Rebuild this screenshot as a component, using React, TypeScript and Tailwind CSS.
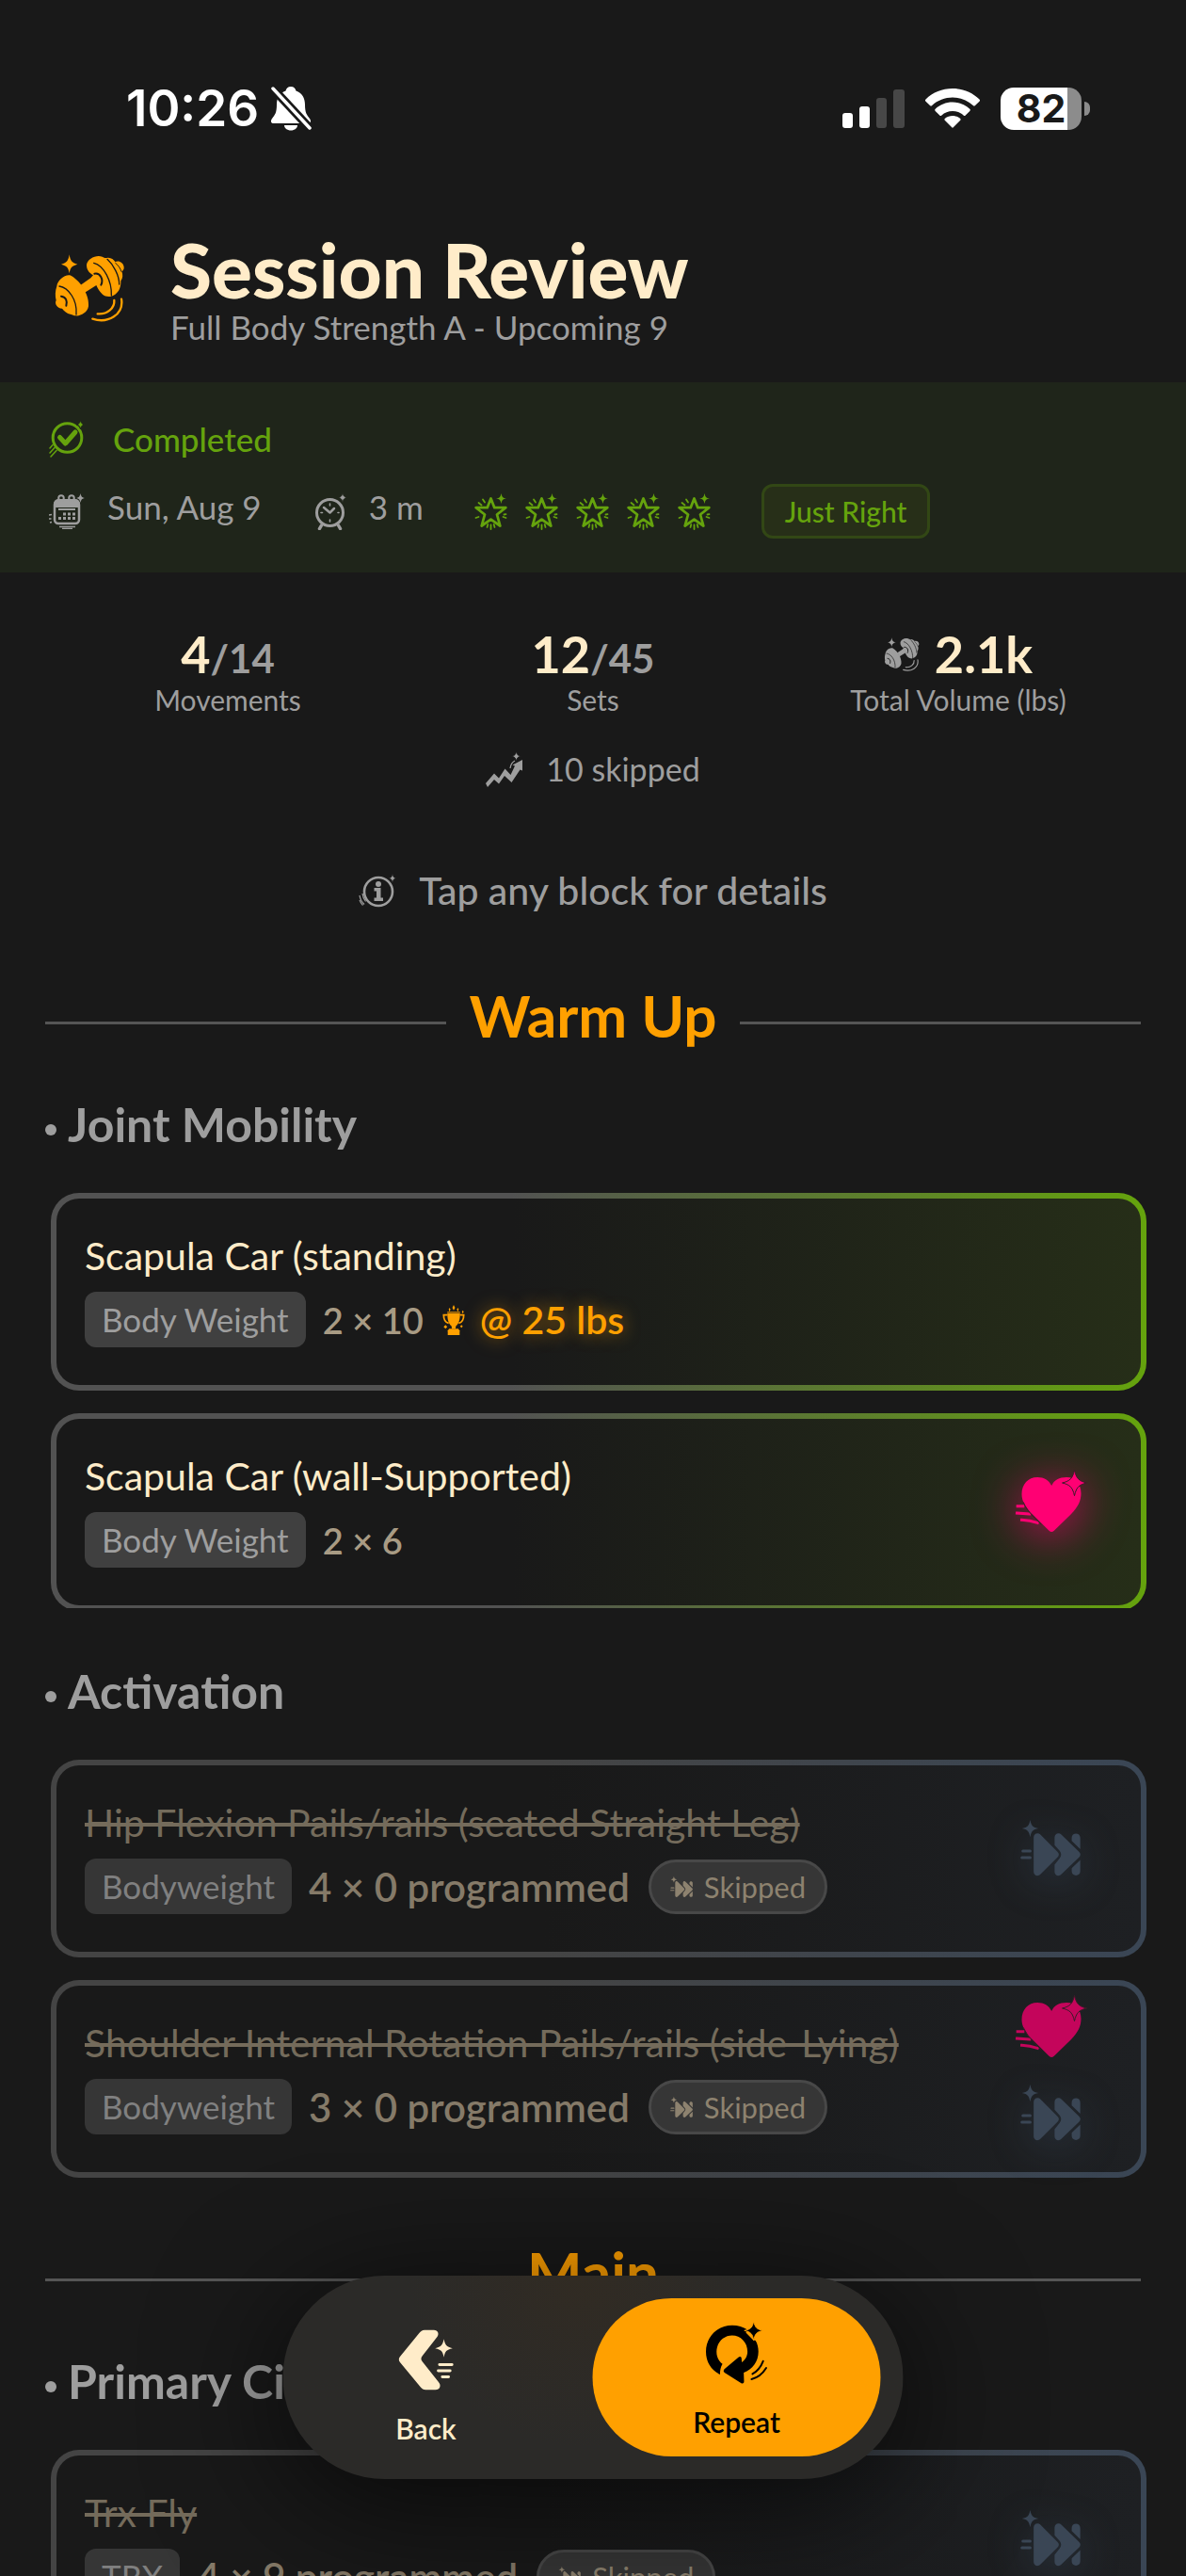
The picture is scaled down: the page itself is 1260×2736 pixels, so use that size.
import React from "react";

type IconProps = { className?: string };

/* ---------- status bar icons ---------- */

function BellOff({ className }: IconProps) {
  return (
    <svg viewBox="0 0 44 48" className={className} fill="currentColor" aria-hidden="true">
      <path d="M22 1c3 0 5 2 5.500 4.500C34 8 37 13 37 20c0 9 2 11 5 15 2 3 1 5-2 5H4c-3 0-4-2-2-5 3-4 5-6 5-15 0-7 3-12 9.500-14.500C17 3 19 1 22 1Z" />
      <path d="M15 42h14c0 3-3 5.500-7 5.500s-7-2.500-7-5.500Z" />
      <path d="M3 3l39 42" stroke="#191919" strokeWidth="9" />
      <path d="M3 3l39 42" stroke="currentColor" strokeWidth="3.500" strokeLinecap="round" />
    </svg>
  );
}

function Signal({ className }: IconProps) {
  return (
    <svg viewBox="0 0 66 42" className={className} aria-hidden="true">
      <rect x="0" y="26" width="11" height="16" rx="3" fill="#fff" />
      <rect x="18" y="19" width="11" height="23" rx="3" fill="#fff" />
      <rect x="36" y="10" width="11" height="32" rx="3" fill="#474747" />
      <rect x="54" y="1" width="12" height="41" rx="3" fill="#474747" />
    </svg>
  );
}

function Wifi({ className }: IconProps) {
  return (
    <svg viewBox="0 0 58 42" className={className} fill="#fff" aria-hidden="true">
      <path d="M29 0c11 0 21 4 28.500 11.500.7.7.7 1.500 0 2.200L53 18c-.7.7-1.500.7-2.200 0C45 12.500 37 9.500 29 9.500S13 12.500 7.200 18c-.7.7-1.500.7-2.200 0L.5 13.700c-.7-.7-.7-1.500 0-2.200C8 4 18 0 29 0Z" />
      <path d="M29 14.500c7 0 13.500 2.700 18.300 7.200.7.700.7 1.500 0 2.200l-4.600 4.500c-.7.700-1.400.700-2.100 0C37.500 25.600 33.500 24 29 24s-8.500 1.600-11.600 4.400c-.7.700-1.400.700-2.100 0l-4.600-4.500c-.7-.7-.7-1.500 0-2.200C15.500 17.200 22 14.500 29 14.500Z" />
      <path d="M29 29c3 0 5.800 1 8 2.800.8.700.8 1.500 0 2.300l-7 7c-.7.700-1.300.700-2 0l-7-7c-.8-.8-.8-1.600 0-2.300C23.200 30 26 29 29 29Z" />
    </svg>
  );
}

/* ---------- app icons ---------- */

function Dumbbell({ className }: IconProps) {
  return (
    <svg viewBox="50 55 228 222" className={className} fill="currentColor" aria-hidden="true">
      <path d="M100 59c3 19 7 26 26 31-19 5-23 12-26 29-3-17-7-24-26-29 19-5 23-12 26-31Z" />
      <path d="M60 160c2-20 28-40 45-34 36 20 60 68 56 98-3 20-26 32-40 30-8 0-10-4-18-5-10-2-20-10-26-18-16 0-25-16-19-26-4-14-3-30 2-45Z" />
      <path d="M155 92c2-20 32-34 50-26 5 2 9 5 14 4 12-3 22 5 27 12 12-5 26 2 28 17 1 8-4 12-7 14 4 10 4 22-3 30 1 16-4 34-18 43-14 10-30 8-40 0-9-8-15-18-20-29l-38 24c-2-10-6-18-12-25l32-22 8-9c-14-8-21-18-21-33Z" />
      <g fill="none" stroke="#191919" strokeLinecap="round">
        <path d="M68 160c28 4 58 42 54 90" strokeWidth="4" />
        <path d="M74 192c16 2 20 16 16 30" strokeWidth="6" />
        <path d="M178 86c32 8 58 58 56 104" strokeWidth="4" />
        <path d="M221 74c20 18 38 52 38 80" strokeWidth="4" />
        <path d="M247 86c10 8 16 18 19 27" strokeWidth="3" />
        <path d="M180 120c18-4 30 18 21 36" strokeWidth="6" />
      </g>
      <g fill="none" stroke="currentColor" strokeWidth="7" strokeLinecap="round">
        <path d="M190 248c30 3 55-18 53-43" />
        <path d="M174 264c50 16 100-14 92-63" />
      </g>
    </svg>
  );
}

function CheckBadge({ className }: IconProps) {
  return (
    <svg viewBox="0 0 38 40" className={className} fill="none" stroke="currentColor" aria-hidden="true">
      <circle cx="19.500" cy="19" r="15.300" strokeWidth="3" />
      <path d="M11.500 18.500l6 6.500L28 13" strokeWidth="5" strokeLinejoin="round" strokeLinecap="round" />
      <path d="M1 30l3-3.500M1 35l5-5.500M2 39l6-6.500" strokeWidth="1.500" strokeLinecap="round" />
      <path d="M33.500 0c.8 3.400 1.200 4.200 4.500 5-3.300.8-3.700 1.600-4.500 5-.8-3.400-1.200-4.200-4.500-5 3.300-.8 3.700-1.600 4.500-5Z" fill="currentColor" stroke="#1f251a" strokeWidth="1" />
    </svg>
  );
}

function Calendar({ className }: IconProps) {
  return (
    <svg viewBox="0 0 38 38" className={className} fill="none" stroke="currentColor" aria-hidden="true">
      <rect x="6" y="8" width="26" height="24" rx="4" strokeWidth="2.500" />
      <path d="M5 15V11a5 5 0 0 1 5-5h18a5 5 0 0 1 5 5v4Z" fill="currentColor" stroke="none" />
      <circle cx="13" cy="5" r="2.800" strokeWidth="2" />
      <circle cx="24" cy="5" r="2.800" strokeWidth="2" />
      <path d="M10 17h18" strokeWidth="2" />
      <path d="M15 22h13M10 26.500h18" strokeWidth="3" strokeDasharray="3 2" />
      <path d="M11 35.500h17M14 37.500h11" strokeWidth="1.400" />
      <path d="M0 23l3-.5M0 27h2.500M1 31l2-.5" strokeWidth="1.300" />
      <path d="M33.500 0c.8 3.400 1.200 4.200 4.500 5-3.300.8-3.700 1.600-4.500 5-.8-3.400-1.200-4.200-4.500-5 3.300-.8 3.700-1.600 4.500-5Z" fill="currentColor" stroke="none" />
    </svg>
  );
}

function AlarmClock({ className }: IconProps) {
  return (
    <svg viewBox="0 0 36 40" className={className} fill="none" stroke="currentColor" strokeLinecap="round" aria-hidden="true">
      <circle cx="16.500" cy="21.500" r="14" strokeWidth="3" />
      <path d="M10 16l6.500 5.500L21 17" strokeWidth="2.500" strokeLinejoin="round" />
      <path d="M16.500 12v2M16.500 29v2M7 21.500h1.500M25 21.500h1" strokeWidth="1.600" />
      <path d="M7.500 35l-2 3.500M25.500 35l2 3.500" strokeWidth="3.500" />
      <path d="M30 0c.9 4 1.400 5 5.500 5.500C31.400 6.200 30.900 7 30 11c-.9-4-1.400-4.800-5.500-5.500C28.600 5 29.100 4 30 0Z" fill="currentColor" stroke="#1f251a" strokeWidth="1" />
    </svg>
  );
}

function StarIcon({ className }: IconProps) {
  return (
    <svg viewBox="0 0 35 39" className={className} fill="none" stroke="currentColor" strokeLinecap="round" aria-hidden="true">
      <path d="M17.500 5.500l3.800 9.700h12l-9.300 7.300 3.300 12-9.800-6.800-9.800 6.800 3.300-12-9.300-7.300h12Z" strokeWidth="2.800" strokeLinejoin="round" />
      <path d="M4.500 10l3 2.500M9 6.500l2 3M1.500 26l3-1M33.500 26l-3-1M31.500 22.500l2-.3M13.500 36l.8-3M17.500 38v-4.500M21.500 36l-.8-3" strokeWidth="1.800" />
      <path d="M28.500 0c.9 4 1.400 4.800 5.500 5.500-4.100.7-4.600 1.500-5.500 5.500-.9-4-1.400-4.800-5.500-5.500C27.100 4.800 27.600 4 28.500 0Z" fill="currentColor" stroke="none" />
    </svg>
  );
}

function Trend({ className }: IconProps) {
  return (
    <svg viewBox="0 0 40 38" className={className} aria-hidden="true" fill="currentColor">
      <path d="M0 34L9 23.500l5 5L20.500 18.500l6 6.500 4.500-9.500-2.500-1L39 9v11.500l-2.500-1L27.500 33 20 26l-6 8.500L9 30l-7 8Z" />
      <path d="M26 18c.5-4 2-6.500 5-8" stroke="currentColor" strokeWidth="1.200" fill="none" />
      <path d="M32.500 0c.8 3.600 1.500 4.500 5 5.200-3.500.7-4.200 1.600-5 5.300-.8-3.700-1.500-4.600-5-5.300 3.500-.7 4.200-1.600 5-5.200Z" stroke="#191919" strokeWidth=".8" />
    </svg>
  );
}

function InfoBadge({ className }: IconProps) {
  return (
    <svg viewBox="0 0 40 36" className={className} fill="none" stroke="currentColor" aria-hidden="true">
      <circle cx="21" cy="19" r="15" strokeWidth="2.600" />
      <circle cx="21" cy="11" r="3" fill="currentColor" stroke="none" />
      <path d="M16.500 15H23.500V25.500H26V29H16.500V25.500H19V18.500H16.500Z" fill="currentColor" stroke="none" />
      <path d="M1 23c.5 4 2.500 7 5 9.500M1 28c1 2.500 2 4 3.500 5.500M4 21c.5 4 1.500 6 3.500 8.500" strokeWidth="1.200" />
      <path d="M36 0c.7 3.300 1.200 4.200 4 4.800-2.800.6-3.300 1.500-4 4.700-.7-3.200-1.200-4.100-4-4.700C34.800 4.200 35.300 3.300 36 0Z" fill="currentColor" stroke="#191919" strokeWidth=".6" />
    </svg>
  );
}

function Trophy({ className }: IconProps) {
  return (
    <svg viewBox="0 0 24 33" className={className} fill="currentColor" aria-hidden="true">
      <path d="M5 9h14c0 7-1.500 12-4.500 14l-.5 3h-4l-.5-3C6.500 21 5 16 5 9Z" />
      <path d="M5 11H1c0 5 2 8 5.500 9M19 11h4c0 5-2 8-5.500 9" fill="none" stroke="currentColor" strokeWidth="1.800" />
      <path d="M7 26h10l1.500 2v5h-13v-5Z" />
      <path d="M12 0l1.500 3L12 6l-1.500-3ZM7.500 3l1 2-1 2.500-1-2.500ZM16.500 3l1 2-1 2.500-1-2.500ZM22 6l1 1.500-1 2-1-2ZM3 22l2 2-2 2-2-2ZM20.500 22l1.500 1.500-1.500 1.500-1.500-1.500Z" />
      <path d="M5 8h14" stroke="currentColor" strokeWidth="1" />
    </svg>
  );
}

function Heart({ className }: IconProps) {
  return (
    <svg viewBox="86 78 224 198" className={className} fill="currentColor" aria-hidden="true">
      <path d="M200 126c-9-18-24-27-45-27-30 0-50 23-50 54 0 22 12 42 34 64l53 52c6 5 10 5 16 0l54-52c22-23 32-42 32-67 0-29-18-51-46-51-24 0-40 9-48 27Z" />
      <path d="M273 76c6 27 14 35 39 41-25 6-33 14-39 41-6-27-14-35-39-41 25-6 33-14 39-41Z" stroke="#3a1c28" strokeWidth="3" />
      <path d="M92 191h17M90 213l40 3M105 235q26 1 50 9" stroke="currentColor" strokeWidth="9" strokeLinecap="square" fill="none" />
      <path d="M110 178q10 26 38 52l20 20" stroke="#3a1c28" strokeWidth="3" fill="none" />
    </svg>
  );
}

function Skip({ className }: IconProps) {
  return (
    <svg viewBox="1152 38 190 178" className={className} fill="currentColor" aria-hidden="true">
      <path d="M1183 38c4 19 8 23 26 27-18 4-22 8-26 27-4-19-8-23-26-27 18-4 22-8 26-27Z" />
      <path d="M1194 93c0-12 13-17 22-8l53 53c6 6 6 12 0 18l-53 53c-9 9-22 4-22-8Z" />
      <path d="M1260 93c0-12 13-17 22-8l55 53c6 6 6 12 0 18l-55 53c-9 9-22 4-22-8v-22l16-20c6-8 6-16 0-24l-16-18Z" />
      <path d="M1314 94c0-17 27-17 27 0v36l-27-26ZM1314 190l27-26v36c0 17-27 17-27 0Z" />
      <path d="M1160 136h23M1157 157h26" stroke="currentColor" strokeWidth="9" strokeLinecap="round" />
    </svg>
  );
}

function BackIcon({ className }: IconProps) {
  return (
    <svg viewBox="68 106 178 196" className={className} fill="currentColor" aria-hidden="true">
      <path d="M151 108h30c13 0 18 12 10 23l-47 60c-5 6-5 12 0 18l52 66c10 11 4 25-10 25h-31c-8 0-12-3-17-9l-65-79c-6-7-6-12 0-19l61-75c5-6 9-10 17-10Z" />
      <path d="M213 137c4 20 8 25 28 30-20 4-24 9-28 29-4-20-8-25-28-29 20-5 24-10 28-30Z" />
      <path d="M199 219h40M195 239h38M208 258h20" stroke="currentColor" strokeWidth="9" strokeLinecap="round" />
    </svg>
  );
}

function RepeatIcon({ className }: IconProps) {
  return (
    <svg viewBox="1050 84 198 202" className={className} fill="currentColor" aria-hidden="true">
      <path d="M1096 256c-28-14-45-40-45-73 0-49 38-85 84-85 19 0 36 5 48 14l-4 10 22 22 9 3c6 10 9 22 9 36 0 32-19 56-47 67l1 28c0 7-5 8-10 5l-50-32c-7-4-7-8-2-13l44-37c5-4 10-2 10 4l1 12c11-8 18-20 18-34 0-30-22-52-49-52s-50 22-50 52c0 17 7 30 19 39-6 10-8 21-8 34Z" />
      <path d="M1204 84c4 21 9 27 30 31-21 5-26 10-30 32-4-22-9-27-30-32 21-4 26-10 30-31Z" stroke="#ffa000" strokeWidth="3" />
      <path d="M1234 213c-7 18-18 32-34 41M1244 235c-11 18-26 31-47 36" fill="none" stroke="currentColor" strokeWidth="6" strokeLinecap="round" />
    </svg>
  );
}

/* ---------- pieces ---------- */

function Stat({ value, total, label, icon }: { value: string; total?: string; label: string; icon?: React.ReactNode }) {
  return (
    <div className="flex flex-col items-center">
      <p className="flex items-center justify-center text-[54px] leading-[60px] font-bold text-[#ffecc9]">
        {icon}
        <span>
          {value}
          {total && <span className="text-[42px] leading-none text-[#9e9e9e]">/{total}</span>}
        </span>
      </p>
      <p className="text-[30px] leading-9 text-[#9e9e9e]">{label}</p>
    </div>
  );
}

function SectionHeading({ children }: { children: string }) {
  return (
    <div className="mx-12 flex items-center gap-6">
      <span className="h-[3px] flex-1 bg-[#555555]" />
      <h2 className="pb-4 text-[62px] leading-[60px] font-bold text-[#ffa000]">{children}</h2>
      <span className="h-[3px] flex-1 bg-[#555555]" />
    </div>
  );
}

function GroupHeading({ children }: { children: string }) {
  return (
    <h3 className="mx-12 flex items-center gap-3 text-[50px] leading-[60px] font-bold text-[#9e9e9e]">
      <span className="mt-3 size-3 rounded-full bg-[#9e9e9e]" />
      {children}
    </h3>
  );
}

type Movement = {
  name: string;
  equipment: string;
  sets: string;
  record?: string;
  favorite?: boolean;
  skipped?: boolean;
};

function MovementCard({ name, equipment, sets, record, favorite, skipped }: Movement) {
  const surface = skipped
    ? "[background:linear-gradient(90deg,#191919_45%,#1e2023)_padding-box,linear-gradient(90deg,#444444_45%,#3a4655)_border-box]"
    : "[background:linear-gradient(90deg,#191919_42%,#262e18)_padding-box,linear-gradient(90deg,#525252_42%,#65a30d)_border-box]";
  return (
    <button
      type="button"
      className={`flex w-full items-center rounded-[30px] border-[6px] border-transparent px-[30px] pt-[37px] pb-10 text-left ${surface}`}
    >
      <span className="min-w-0 flex-1">
        <span
          className={`block text-[41px] leading-[48px] whitespace-nowrap ${skipped ? "text-[#746b5b] line-through decoration-[4px]" : "text-[#ffecc9]"}`}
        >
          {name}
        </span>
        <span className="mt-[14px] flex items-center">
          <span
            className={`rounded-xl px-[18px] text-[35px] leading-[59px] whitespace-nowrap ${skipped ? "bg-[#363636] text-[#808080]" : "bg-[#404040] text-[#9e9e9e]"}`}
          >
            {equipment}
          </span>
          <span
            className={`ml-[18px] leading-[56px] font-semibold whitespace-nowrap ${skipped ? "text-[42px] text-[#857a68]" : "text-[38px] text-[#a89b84]"}`}
          >
            {sets}
          </span>
          {record && (
            <span className="ml-5 flex items-center gap-4 text-[41px] leading-[56px] font-semibold whitespace-nowrap text-[#ffa000]">
              <Trophy className="h-8 w-6" />
              <span className="[text-shadow:0_0_18px_rgba(255,160,0,0.6)]">{record}</span>
            </span>
          )}
          {skipped && (
            <span className="ml-5 flex h-[58px] items-center gap-3 rounded-full border-[3px] border-[#484848] bg-[#363636] px-5 text-[31px] leading-[52px] whitespace-nowrap text-[#8d826f]">
              <Skip className="size-6" />
              Skipped
            </span>
          )}
        </span>
      </span>
      <span className="mr-7 -mt-11 -mb-6 flex w-[76px] flex-col items-center gap-7">
        {favorite && (
          <Heart
            className={`h-[66px] w-[75px] overflow-visible ${skipped ? "text-[#c4055b]" : "text-[#ff0073] drop-shadow-[0_8px_24px_rgba(255,0,115,0.7)]"}`}
          />
        )}
        {skipped && <Skip className="h-[60px] w-16 text-[#3a4655] drop-shadow-[0_8px_20px_rgba(70,95,125,0.3)]" />}
      </span>
    </button>
  );
}

export default function App() {
  return (
    <div className="relative flex h-screen flex-col overflow-hidden bg-[#191919] font-['Lato',sans-serif]">
      <div className="flex h-[230px] shrink-0 items-start justify-between pt-[80px] pr-[102px] pl-[134px] font-['Inter',sans-serif]">
        <div className="flex h-[70px] items-center gap-3 text-white">
          <span className="text-[53px] leading-[70px] font-semibold">10:26</span>
          <BellOff className="h-12 w-11" />
        </div>
        <div className="flex h-[70px] items-center gap-[22px]">
          <Signal className="h-[42px] w-[66px]" />
          <Wifi className="h-[42px] w-[58px]" />
          <div className="flex items-center gap-[3px]">
            <div className="flex h-[45px] w-[86px] items-center justify-center rounded-[14px] bg-[linear-gradient(90deg,#ffffff_82%,#8c8c8c_82%)] text-[41px] leading-[45px] font-bold text-[#191919]">
              82
            </div>
            <span className="h-[15px] w-[6px] rounded-r-full bg-[#8c8c8c]" />
          </div>
        </div>
      </div>

      <main className="min-h-0 flex-1 overflow-hidden">
        <header className="flex items-start gap-[48px] pt-5 pb-[35px] pl-[57px]">
          <Dumbbell className="mt-[18px] size-[76px] text-[#ffa000]" />
          <div>
            <h1 className="text-[80px] leading-[73px] font-black text-[#ffecc9]">Session Review</h1>
            <p className="text-[35px] leading-[48px] text-[#9e9e9e]">Full Body Strength A - Upcoming 9</p>
          </div>
        </header>

        <section className="bg-[#1f251a] px-[52px] py-9 text-[35px] leading-[48px]">
          <div className="flex items-center gap-[30px] text-[#65a30d]">
            <CheckBadge className="h-10 w-[38px]" />
            <span className="font-medium">Completed</span>
          </div>
          <div className="mt-6 flex items-start text-[#9e9e9e]">
            <Calendar className="size-[38px] self-center" />
            <span className="ml-6">Sun, Aug 9</span>
            <AlarmClock className="ml-14 h-10 w-9 self-center" />
            <span className="ml-[22px]">3 m</span>
            <div className="ml-[54px] flex gap-[19px] self-center text-[#65a30d]" role="img" aria-label="5 stars">
              {[1, 2, 3, 4, 5].map((n) => (
                <StarIcon key={n} className="h-[39px] w-[35px]" />
              ))}
            </div>
            <span className="ml-[54px] rounded-xl border-[3px] border-[#324715] bg-[#272f18] px-[22px] text-[30px] leading-[52px] font-medium text-[#65a30d]">
              Just Right
            </span>
          </div>
        </section>

        <section className="grid grid-cols-3 px-12 pt-[57px]">
          <Stat value="4" total="14" label="Movements" />
          <Stat value="12" total="45" label="Sets" />
          <Stat
            value="2.1k"
            label="Total Volume (lbs)"
            icon={<Dumbbell className="mr-4 size-[38px] text-[#9e9e9e]" />}
          />
        </section>

        <p className="mt-8 flex items-center justify-center gap-6 text-[34px] leading-[48px] text-[#9e9e9e]">
          <Trend className="h-[38px] w-10" />
          10 skipped
        </p>
        <p className="mt-[81px] flex items-center justify-center gap-6 text-[41px] leading-[48px] font-medium text-[#9e9e9e]">
          <InfoBadge className="h-9 w-10" />
          Tap any block for details
        </p>

        <div className="mt-[78px]">
          <SectionHeading>Warm Up</SectionHeading>
        </div>
        <div className="mt-10">
          <GroupHeading>Joint Mobility</GroupHeading>
        </div>
        <div className="mt-[43px] mr-[42px] ml-[54px] flex flex-col gap-6 overflow-hidden">
          <MovementCard name="Scapula Car (standing)" equipment="Body Weight" sets="2 × 10" record="@ 25 lbs" />
          <div className="-mb-[3px]">
            <MovementCard name="Scapula Car (wall-Supported)" equipment="Body Weight" sets="2 × 6" favorite />
          </div>
        </div>

        <div className="mt-[58px]">
          <GroupHeading>Activation</GroupHeading>
        </div>
        <div className="mt-[43px] mr-[42px] ml-[54px] flex flex-col gap-6">
          <MovementCard
            name="Hip Flexion Pails/rails (seated Straight Leg)"
            equipment="Bodyweight"
            sets="4 × 0 programmed"
            skipped
          />
          <MovementCard
            name="Shoulder Internal Rotation Pails/rails (side-Lying)"
            equipment="Bodyweight"
            sets="3 × 0 programmed"
            favorite
            skipped
          />
        </div>

        <div className="mt-[70px]">
          <SectionHeading>Main</SectionHeading>
        </div>
        <div className="mt-10">
          <GroupHeading>Primary Circuit</GroupHeading>
        </div>
        <div className="mt-[43px] mr-[42px] ml-[54px]">
          <MovementCard name="Trx Fly" equipment="TRX" sets="4 × 9 programmed" skipped />
        </div>
      </main>

      <nav className="absolute bottom-[103px] left-1/2 flex -translate-x-1/2 gap-[49px] rounded-full bg-[#2b2a28] bg-[radial-gradient(circle_at_48%_0%,#312b23,#2b2a28_45%)] p-6 text-[30px] leading-9 font-semibold shadow-[0_24px_140px_rgba(0,0,0,0.7)]">
        <button type="button" className="flex h-[168px] w-64 flex-col items-center justify-center gap-[22px] rounded-full pt-5 text-[#ffecc9]">
          <BackIcon className="h-[65px] w-[59px]" />
          Back
        </button>
        <button type="button" className="flex h-[168px] w-[306px] flex-col items-center justify-center gap-[22px] rounded-full bg-[#ffa000] pt-1 text-black">
          <RepeatIcon className="h-[67px] w-[66px]" />
          Repeat
        </button>
      </nav>
    </div>
  );
}
